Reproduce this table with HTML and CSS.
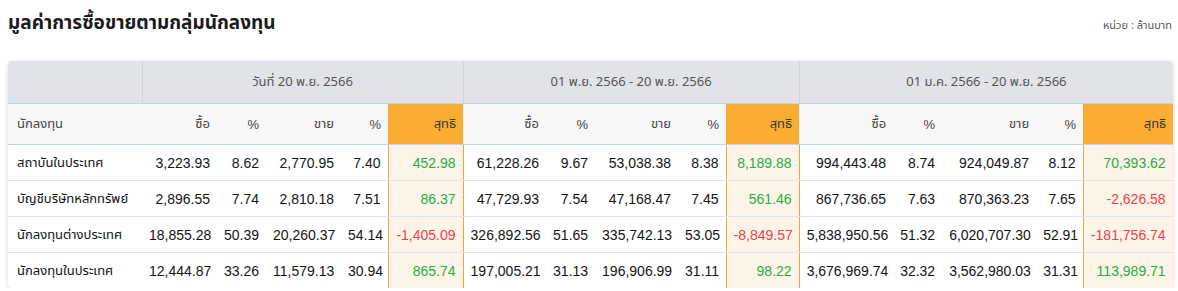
FILE: index.html
```html
<!DOCTYPE html>
<html lang="th">
<head>
<meta charset="utf-8">
<title>มูลค่าการซื้อขายตามกลุ่มนักลงทุน</title>
<link rel="stylesheet" href="styles.css">
</head>
<body>
<div class="page">
  <div class="head">
    <h2 class="title">มูลค่าการซื้อขายตามกลุ่มนักลงทุน</h2>
    <span class="unit">หน่วย : ล้านบาท</span>
  </div>
  <div class="card">
    <table class="grid">
      <colgroup>
        <col style="width:134px">
        <col style="width:75px"><col style="width:49px"><col style="width:75px"><col style="width:47px"><col style="width:75px">
        <col style="width:83px"><col style="width:49px"><col style="width:83px"><col style="width:48px"><col style="width:73px">
        <col style="width:94px"><col style="width:49px"><col style="width:94px"><col style="width:47px"><col style="width:90px">
      </colgroup>
      <thead>
        <tr class="group-row">
          <th class="sticky"></th>
          <th colspan="5" class="group">วันที่ 20 พ.ย. 2566</th>
          <th colspan="5" class="group">01 พ.ย. 2566 - 20 พ.ย. 2566</th>
          <th colspan="5" class="group last">01 ม.ค. 2566 - 20 พ.ย. 2566</th>
        </tr>
        <tr class="sub-row">
          <th class="sticky name">นักลงทุน</th>
          <th>ซื้อ</th><th>%</th><th>ขาย</th><th>%</th><th class="net">สุทธิ</th>
          <th>ซื้อ</th><th>%</th><th>ขาย</th><th>%</th><th class="net">สุทธิ</th>
          <th>ซื้อ</th><th>%</th><th>ขาย</th><th>%</th><th class="net">สุทธิ</th>
        </tr>
      </thead>
      <tbody>
        <tr>
          <td class="sticky name">สถาบันในประเทศ</td>
          <td>3,223.93</td><td>8.62</td><td>2,770.95</td><td>7.40</td><td class="net pos">452.98</td>
          <td>61,228.26</td><td>9.67</td><td>53,038.38</td><td>8.38</td><td class="net pos">8,189.88</td>
          <td>994,443.48</td><td>8.74</td><td>924,049.87</td><td>8.12</td><td class="net pos">70,393.62</td>
        </tr>
        <tr>
          <td class="sticky name">บัญชีบริษัทหลักทรัพย์</td>
          <td>2,896.55</td><td>7.74</td><td>2,810.18</td><td>7.51</td><td class="net pos">86.37</td>
          <td>47,729.93</td><td>7.54</td><td>47,168.47</td><td>7.45</td><td class="net pos">561.46</td>
          <td>867,736.65</td><td>7.63</td><td>870,363.23</td><td>7.65</td><td class="net neg">-2,626.58</td>
        </tr>
        <tr>
          <td class="sticky name">นักลงทุนต่างประเทศ</td>
          <td>18,855.28</td><td>50.39</td><td>20,260.37</td><td>54.14</td><td class="net neg">-1,405.09</td>
          <td>326,892.56</td><td>51.65</td><td>335,742.13</td><td>53.05</td><td class="net neg">-8,849.57</td>
          <td>5,838,950.56</td><td>51.32</td><td>6,020,707.30</td><td>52.91</td><td class="net neg">-181,756.74</td>
        </tr>
        <tr>
          <td class="sticky name">นักลงทุนในประเทศ</td>
          <td>12,444.87</td><td>33.26</td><td>11,579.13</td><td>30.94</td><td class="net pos">865.74</td>
          <td>197,005.21</td><td>31.13</td><td>196,906.99</td><td>31.11</td><td class="net pos">98.22</td>
          <td>3,676,969.74</td><td>32.32</td><td>3,562,980.03</td><td>31.31</td><td class="net pos">113,989.71</td>
        </tr>
      </tbody>
    </table>
  </div>
</div>
</body>
</html>
```

FILE: styles.css
```css
html, body {
  margin: 0;
  padding: 0;
  background: #ffffff;
}

body {
  font-family: "Liberation Sans", "Noto Sans Thai", "DejaVu Sans", sans-serif;
  color: #222;
}

.page {
  padding: 8px 5px 0 8px;
}

.head {
  display: flex;
  justify-content: space-between;
  align-items: flex-start;
  height: 53px;
}

.title {
  margin: 0;
  padding-top: 2px;
  font-family: "Noto Sans Thai", "Liberation Sans", sans-serif;
  font-size: 19px;
  line-height: 28px;
  font-weight: 700;
  color: #1a1a1a;
}

.unit {
  font-family: "Noto Sans Thai", "Liberation Sans", sans-serif;
  font-size: 11px;
  color: #555;
  line-height: 14px;
  margin-top: 11px;
  margin-right: 1px;
}

.card {
  border-radius: 4px;
  box-shadow: 0 1px 4px rgba(0, 0, 0, 0.16);
  overflow: hidden;
}

.grid {
  width: 1165px;
  table-layout: fixed;
  border-collapse: collapse;
  font-size: 14px;
}

.grid th,
.grid td {
  padding: 0 7px;
  text-align: right;
  white-space: nowrap;
}

.group-row th {
  height: 42px;
  background: #e0e3e8;
  font-family: "Noto Sans Thai", "Liberation Sans", sans-serif;
  font-weight: 400;
  font-size: 13px;
  color: #555;
  text-align: center;
  border-bottom: 1px solid #c5d3e9;
}

.group-row th.group {
  border-left: 1px solid #cfd4db;
}

.sub-row th {
  height: 40px;
  background: #f7f7f7;
  font-weight: 400;
  font-size: 13px;
  color: #444;
  border-bottom: 1px solid #c5d3e9;
}

.grid th.name,
.grid td.name {
  text-align: left;
  padding-left: 9px;
}

.grid th.sticky,
.grid td.sticky {
  box-shadow: 4px 0 5px -3px rgba(0, 0, 0, 0.10);
  position: relative;
}

.sub-row th.net {
  background: #f9ae33;
  color: #333;
}

.grid tbody td {
  height: 35px;
  border-bottom: 1px solid #e1e4e9;
  color: #141414;
  font-weight: 400;
}

.grid tbody tr:last-child td {
  border-bottom: none;
}

.grid td.name {
  font-family: "Noto Sans Thai", "Liberation Sans", sans-serif;
  font-size: 13px;
  font-weight: 400;
  color: #111;
}

.grid td.net {
  background: #fdf4e8;
  border-left: 1px solid #f0a444;
  border-right: 1px solid #f0a444;
}

.grid td.pos {
  color: #1fae4a;
}

.grid td.neg {
  color: #f0404f;
}
```
